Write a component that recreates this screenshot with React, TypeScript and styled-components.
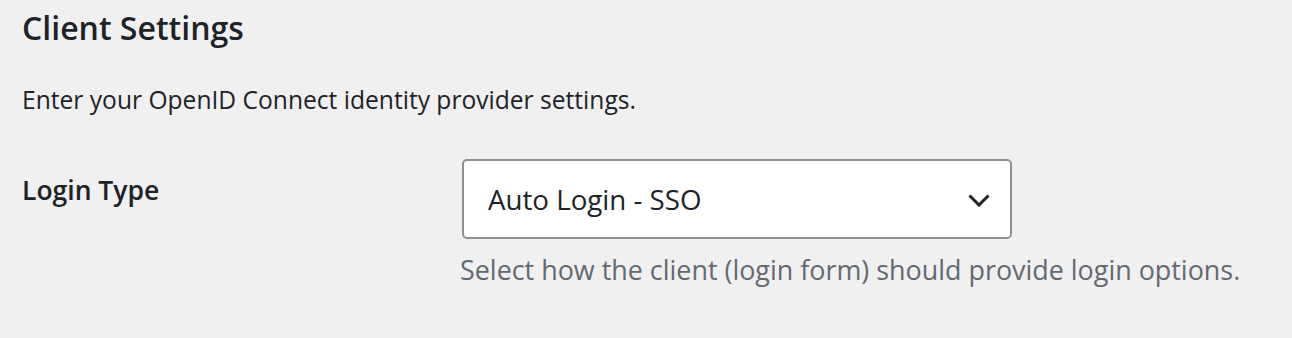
import styled, { createGlobalStyle } from "styled-components";

const GlobalStyle = createGlobalStyle`
  html, body {
    margin: 0;
    padding: 0;
    background: #f0f0f1;
  }
  body {
    font-family: "Open Sans", "Noto Sans", sans-serif;
    color: #1d2327;
  }
`;

const Page = styled.div`
  padding: 8px 22px 0 22px;
`;

const Title = styled.h2`
  margin: 0;
  font-size: 32px;
  font-weight: 600;
  line-height: 40px;
`;

const Intro = styled.p`
  margin: 34px 0 0;
  font-size: 24.6px;
  line-height: 36px;
`;

const FieldRow = styled.div`
  display: grid;
  grid-template-columns: 440px 1fr;
  margin-top: 41px;
`;

const Label = styled.label`
  padding-top: 13px;
  font-size: 26.5px;
  font-weight: 600;
  line-height: 36px;
`;

const Field = styled.div`
  display: flex;
  flex-direction: column;
  align-items: flex-start;
`;

const Select = styled.div`
  box-sizing: border-box;
  width: 550px;
  height: 80px;
  display: flex;
  align-items: center;
  justify-content: space-between;
  padding: 0 20px 0 24px;
  background: #fff;
  border: 2px solid #8c8f94;
  border-radius: 5px;
  font-size: 27.7px;
  color: #1d2327;
  cursor: pointer;
`;

const Hint = styled.p`
  margin: 13px 0 0 -2px;
  font-size: 26.9px;
  line-height: 36px;
  color: #646970;
`;

function Chevron() {
  return (
    <svg width="22" height="16" viewBox="0 0 22 16" aria-hidden="true">
      <polyline
        points="1.5,4.5 11,14 20.5,4.5"
        fill="none"
        stroke="#1d2327"
        strokeWidth="3"
      />
    </svg>
  );
}

export default function App() {
  return (
    <Page>
      <GlobalStyle />
      <Title>Client Settings</Title>
      <Intro>Enter your OpenID Connect identity provider settings.</Intro>
      <FieldRow>
        <Label>Login Type</Label>
        <Field>
          <Select>
            <span>Auto Login - SSO</span>
            <Chevron />
          </Select>
          <Hint>Select how the client (login form) should provide login options.</Hint>
        </Field>
      </FieldRow>
    </Page>
  );
}
